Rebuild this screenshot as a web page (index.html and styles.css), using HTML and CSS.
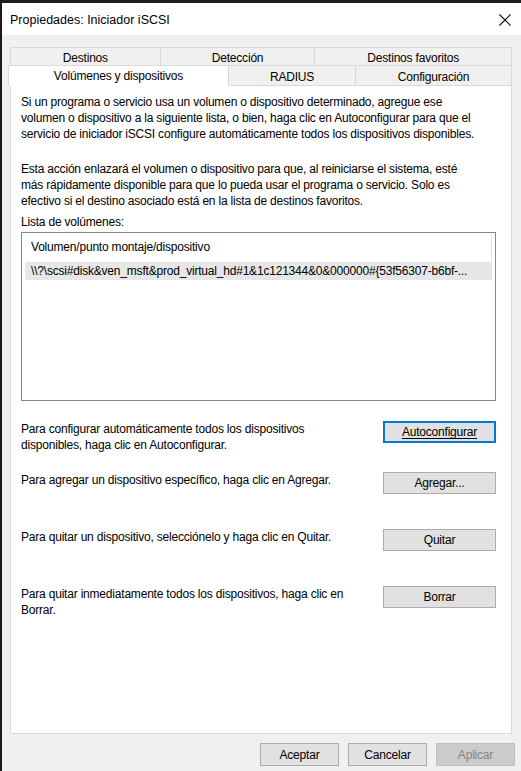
FILE: index.html
```html
<!DOCTYPE html>
<html lang="es">
<head>
<meta charset="utf-8">
<title>Propiedades: Iniciador iSCSI</title>
<link rel="stylesheet" href="styles.css">
</head>
<body>
<div class="window">
  <div class="titlebar">
    <span class="title">Propiedades: Iniciador iSCSI</span>
    <span class="close" aria-label="Cerrar">
      <svg width="12" height="12" viewBox="0 0 12 12"><path d="M0.5 0.5 L11.5 11.5 M11.5 0.5 L0.5 11.5" stroke="#111" stroke-width="1.1" fill="none"/></svg>
    </span>
  </div>
  <div class="body">
    <div class="tabs">
      <div class="tabrow tabrow-back">
        <div class="tab t-destinos">Destinos</div>
        <div class="tab t-deteccion">Detección</div>
        <div class="tab t-favoritos">Destinos favoritos</div>
      </div>
      <div class="tabrow tabrow-front">
        <div class="tab tab-active t-volumenes">Volúmenes y dispositivos</div>
        <div class="tab t-radius">RADIUS</div>
        <div class="tab t-config">Configuración</div>
      </div>
    </div>
    <div class="panel">
      <p class="para">Si un programa o servicio usa un volumen o dispositivo determinado, agregue ese<br>volumen o dispositivo a la siguiente lista, o bien, haga clic en Autoconfigurar para que el<br>servicio de iniciador iSCSI configure automáticamente todos los dispositivos disponibles.</p>
      <p class="para para-2">Esta acción enlazará el volumen o dispositivo para que, al reiniciarse el sistema, esté<br>más rápidamente disponible para que lo pueda usar el programa o servicio. Solo es<br>efectivo si el destino asociado está en la lista de destinos favoritos.</p>
      <div class="list-label">Lista de volúmenes:</div>
      <div class="listbox">
        <div class="list-head">Volumen/punto montaje/dispositivo</div>
        <div class="list-row">\\?\scsi#disk&amp;ven_msft&amp;prod_virtual_hd#1&amp;1c121344&amp;0&amp;000000#{53f56307-b6bf-...</div>
      </div>
      <div class="action action-1">
        <div class="action-text">Para configurar automáticamente todos los dispositivos<br>disponibles, haga clic en Autoconfigurar.</div>
        <button class="btn btn-focus"><span class="focus-text">Autoconfigurar</span></button>
      </div>
      <div class="action action-2">
        <div class="action-text">Para agregar un dispositivo específico, haga clic en Agregar.</div>
        <button class="btn">Agregar...</button>
      </div>
      <div class="action action-3">
        <div class="action-text">Para quitar un dispositivo, selecciónelo y haga clic en Quitar.</div>
        <button class="btn">Quitar</button>
      </div>
      <div class="action action-4">
        <div class="action-text">Para quitar inmediatamente todos los dispositivos, haga clic en<br>Borrar.</div>
        <button class="btn">Borrar</button>
      </div>
    </div>
    <div class="footer">
      <button class="btn btn-foot">Aceptar</button>
      <button class="btn btn-foot">Cancelar</button>
      <button class="btn btn-foot btn-disabled">Aplicar</button>
    </div>
  </div>
</div>
</body>
</html>
```
FILE: styles.css
```css
* { box-sizing: border-box; }
html, body { margin: 0; padding: 0; }
body {
  width: 521px;
  height: 771px;
  overflow: hidden;
  background: #f0f0f0;
  font-family: "Liberation Sans", Arial, sans-serif;
  font-size: 12px;
  letter-spacing: -0.2px;
  color: #000;
}
.window {
  width: 521px;
  height: 771px;
  border-left: 2px solid #1c1c1c;
  border-top: 3px solid #1c1c1c;
  display: flex;
  flex-direction: column;
  background: #f0f0f0;
}
.titlebar {
  height: 32px;
  background: #fff;
  display: flex;
  align-items: center;
  justify-content: space-between;
  padding: 0 10px 0 8px;
  flex: none;
}
.title { font-size: 12.5px; color: #000; padding-top: 1px; letter-spacing: 0; }
.close { display: flex; align-items: center; padding-top: 2px; }
.body {
  flex: 1;
  display: flex;
  flex-direction: column;
  padding: 12px 0 0 0;
}
.tabs { margin-left: 6px; width: 504px; }
.tabrow { display: flex; }
.tabrow-back { height: 18px; margin-left: 2px; }
.tabrow-front { height: 21px; margin-bottom: -1px; position: relative; z-index: 2; }
.tab {
  background: #f0f0f0;
  border: 1px solid #d9d9d9;
  border-bottom: none;
  display: flex;
  align-items: center;
  justify-content: center;
  color: #000;
  font-size: 12px;
  margin-left: -1px;
}
.tabrow-back .tab { line-height: 16px; padding-top: 2px; }
.t-destinos { width: 151px; margin-left: 0; }
.t-deteccion { width: 156px; }
.t-favoritos { width: 198px; }
.t-volumenes {
  width: 221px;
  margin-left: 0;
  background: #fff;
  align-items: flex-start;
  padding-top: 3px;
}
.t-radius { width: 128px; }
.t-config { width: 157px; }
.tabrow-front .tab:not(.tab-active) { height: 20px; padding-top: 2px; }
.panel {
  margin-left: 8px;
  width: 502px;
  height: 649px;
  background: #fff;
  border: 1px solid #d9d9d9;
  padding: 8px 15px 0 10px;
  flex: none;
}
.para {
  margin: 0;
  line-height: 16px;
  font-size: 12px;
}
.para-2 { margin-top: 19px; }
.list-label { margin-top: 5px; line-height: 16px; }
.listbox {
  margin-top: 2px;
  height: 169px;
  border: 1px solid #828790;
  background: #fff;
  padding: 2px 3px 0 3px;
}
.list-head {
  height: 28px;
  line-height: 24px;
  padding-left: 6px;
  border-bottom: 1px solid #e5e5e5;
  border-right: 1px solid #e5e5e5;
  color: #000;
}
.list-row {
  height: 17px;
  line-height: 16px;
  padding-left: 6px;
  background: #e7e7e7;
  white-space: nowrap;
  overflow: hidden;
}
.action {
  display: flex;
  justify-content: space-between;
  align-items: flex-start;
}
.action-text { line-height: 16px; }
.action-1 { margin-top: 20px; height: 51px; }
.action-2 { height: 57px; }
.action-3 { height: 57px; }
.action-4 { height: 50px; }
.btn {
  font-family: inherit;
  font-size: 12px;
  letter-spacing: -0.2px;
  color: #000;
  background: #e1e1e1;
  border: 1px solid #adadad;
  width: 113px;
  height: 22px;
  padding: 0;
  margin: 0;
  flex: none;
}
.btn-focus { border: 2px solid #0078d7; }
.focus-text { text-decoration: underline; text-underline-offset: 2px; }
.footer {
  display: flex;
  justify-content: flex-end;
  gap: 9px;
  padding: 9px 6px 0 0;
}
.btn-foot { width: 79px; height: 23px; }
.btn-disabled {
  background: #cccccc;
  border-color: #bfbfbf;
  color: #838383;
}
```
